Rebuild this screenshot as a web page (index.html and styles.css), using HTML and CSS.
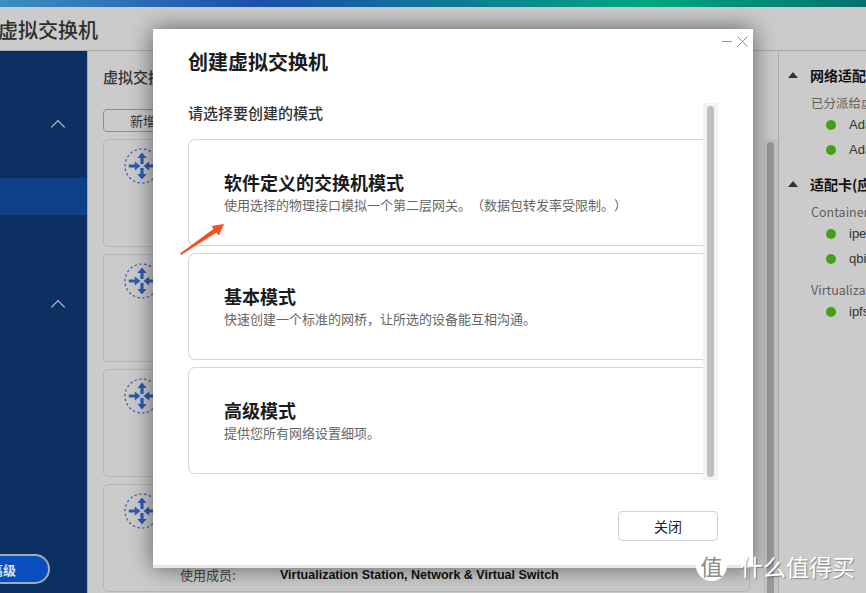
FILE: index.html
```html
<!DOCTYPE html>
<html lang="zh-CN">
  <head>
    <meta charset="UTF-8" />
    <meta name="viewport" content="width=device-width, initial-scale=1.0" />
    <title>虚拟交换机</title>
    <link rel="stylesheet" href="styles.css">
  </head>
  <body>
    <svg class="icon-defs" width="0" height="0">
      <symbol id="switch-icon" viewBox="0 0 36 36">
        <circle cx="18" cy="18" r="17" fill="none" stroke="#2f5bb5" stroke-width="1.2" stroke-dasharray="2.4 2.4" />
        <path d="M18 4.5l4.6 5.6h-3v6h-3.2v-6h-3zM18 31.5l-4.6-5.6h3v-6h3.2v6h3zM4.8 16.4h6v-3l5.6 4.6-5.6 4.6v-3h-6zM31.2 19.6h-6v3l-5.6-4.6 5.6-4.6v3h6z" fill="#2f5bb5" />
      </symbol>
    </svg>

    <div class="topbar"></div>
    <header class="app-header">虚拟交换机</header>

    <div class="app-body">
      <nav class="sidebar">
        <div class="nav-group nav-group-first"><span class="chevron"></span></div>
        <div class="nav-item-active"></div>
        <div class="nav-group nav-group-second"><span class="chevron"></span></div>
        <button class="advanced-btn" type="button">高级</button>
      </nav>

      <main class="main">
        <div class="main-content">
          <h2 class="main-title">虚拟交换机</h2>
          <button class="add-btn" type="button">新增</button>
          <div class="switch-card"><svg class="switch-icon"><use href="#switch-icon" /></svg></div>
          <div class="switch-card"><svg class="switch-icon"><use href="#switch-icon" /></svg></div>
          <div class="switch-card"><svg class="switch-icon"><use href="#switch-icon" /></svg></div>
          <div class="switch-card">
            <svg class="switch-icon"><use href="#switch-icon" /></svg>
            <div class="member-row">
              <span class="member-label">使用成员:</span>
              <span class="member-value">Virtualization Station, Network &amp; Virtual Switch</span>
            </div>
          </div>
        </div>
        <div class="main-scroll"><div class="main-thumb"></div></div>
      </main>

      <aside class="panel">
        <div class="panel-head panel-head-first"><span class="triangle"></span>网络适配器</div>
        <div class="panel-label">已分派给虚拟交换机</div>
        <div class="panel-row"><span class="dot"></span>Adapter 1</div>
        <div class="panel-row"><span class="dot"></span>Adapter 2</div>

        <div class="panel-head panel-head-second"><span class="triangle"></span>适配卡(应用程序)</div>
        <div class="panel-label">Container Station</div>
        <div class="panel-row"><span class="dot"></span>ipext</div>
        <div class="panel-row"><span class="dot"></span>qbittorrent</div>
        <div class="panel-label panel-label-gap">Virtualization Station</div>
        <div class="panel-row"><span class="dot"></span>ipfs</div>
      </aside>
    </div>

    <div class="dialog">
      <div class="dialog-controls">
        <span class="minimize"></span>
        <svg class="close-x" width="11" height="11" viewBox="0 0 11 11">
          <path d="M.5.5l10 10M10.5.5l-10 10" stroke="#8a8a8a" stroke-width="1" fill="none" />
        </svg>
      </div>
      <h1 class="dialog-title">创建虚拟交换机</h1>
      <div class="dialog-scroll">
        <div class="dialog-content">
          <p class="dialog-sub">请选择要创建的模式</p>
          <div class="mode-card">
            <div class="mode-title">软件定义的交换机模式</div>
            <div class="mode-desc">使用选择的物理接口模拟一个第二层网关。&#xFF08;数据包转发率受限制。&#xFF09;</div>
          </div>
          <div class="mode-card">
            <div class="mode-title">基本模式</div>
            <div class="mode-desc">快速创建一个标准的网桥&#xFF0C;让所选的设备能互相沟通。</div>
          </div>
          <div class="mode-card">
            <div class="mode-title">高级模式</div>
            <div class="mode-desc">提供您所有网络设置细项。</div>
          </div>
        </div>
        <div class="dialog-track"><div class="dialog-thumb"></div></div>
      </div>
      <div class="dialog-foot">
        <button class="close-btn" type="button">关闭</button>
      </div>
    </div>

    <svg class="annotation" width="50" height="36" viewBox="0 0 50 36">
      <path d="M1 32.5L34.5 8 32.5 5 45 3 40 14.5 37.5 11.5 2 34z" fill="#f4511e" />
    </svg>

    <div class="watermark">
      <span class="watermark-logo">值</span>
      <span class="watermark-text">什么值得买</span>
    </div>
  </body>
</html>
```

FILE: styles.css
```css
body {
  font-family: "Noto Sans CJK SC", "Liberation Sans", sans-serif;
  margin: 0;
  padding: 0;
  width: 866px;
  height: 593px;
  overflow: hidden;
  position: relative;
  background-color: #cbcbcb;
  color: #2b2b2b;
}

.icon-defs {
  position: absolute;
}

.topbar {
  height: 7px;
  background: linear-gradient(90deg, #3b8fc0 0%, #1c50ae 30%, #00a880 75%, #05706f 100%);
}

.app-header {
  height: 43px;
  line-height: 45px;
  margin-left: -2px;
  font-size: 20px;
  font-weight: 500;
  color: #2e2e2e;
  border-bottom: 1px solid #a9a9a9;
}

.app-body {
  display: flex;
  height: 542px;
}

/* left navigation */
.sidebar {
  width: 87px;
  flex-shrink: 0;
  background-color: #0a2f60;
  border-right: 1px solid #a9a9a9;
  display: flex;
  flex-direction: column;
  overflow: hidden;
}

.nav-group {
  display: flex;
  justify-content: flex-end;
  padding-right: 24px;
  box-sizing: border-box;
}

.nav-group-first {
  height: 127px;
  padding-top: 71px;
}

.nav-group-second {
  height: 128px;
  padding-top: 87px;
}

.nav-item-active {
  height: 37px;
  background-color: #0e4088;
}

.chevron {
  width: 9px;
  height: 9px;
  border-left: 1.5px solid #c6cfdc;
  border-top: 1.5px solid #c6cfdc;
  transform: rotate(45deg);
}

.advanced-btn {
  width: 80px;
  height: 30px;
  margin: 211px 0 0 -30px;
  padding: 0 0 0 18px;
  text-align: left;
  font-family: inherit;
  font-size: 13px;
  font-weight: 700;
  color: #dfe3ea;
  background-color: #0a4dbf;
  border: 2px solid #a4abb6;
  border-radius: 15px;
  flex-shrink: 0;
}

/* main list */
.main {
  width: 690px;
  flex-shrink: 0;
  display: flex;
}

.main-content {
  width: 647px;
  margin-right: 13px;
  padding-left: 15px;
  flex-shrink: 0;
}

.main-title {
  margin: 15px 0 0;
  font-size: 15px;
  line-height: 22px;
  font-weight: 500;
  color: #333;
}

.add-btn {
  display: block;
  width: 90px;
  height: 23px;
  margin-top: 21px;
  padding: 0 0 0 26px;
  text-align: left;
  font-family: inherit;
  font-size: 13px;
  color: #333;
  background: transparent;
  border: 1px solid #8f8f8f;
  border-radius: 4px;
}

.switch-card {
  height: 108px;
  margin-top: 7px;
  box-sizing: border-box;
  border: 1px solid #b5b5b5;
  border-radius: 5px;
  padding: 8px 0 0 20px;
}

.switch-icon {
  display: block;
  width: 36px;
  height: 36px;
}

.member-row {
  display: flex;
  margin: 37px 0 0 56px;
  font-size: 12.5px;
  line-height: 18px;
}

.member-label {
  width: 100px;
  color: #444;
  font-size: 13px;
}

.member-value {
  font-family: "Liberation Sans", sans-serif;
  font-weight: 700;
  color: #111;
}

.main-scroll {
  width: 15px;
  height: 454px;
  margin-top: 88px;
  background-color: #c3c3c3;
  padding: 3px 4px 0;
  box-sizing: border-box;
}

.main-thumb {
  height: 460px;
  background-color: #989898;
  border-radius: 4px;
}

/* right panel */
.panel {
  flex: 1;
  border-left: 1px solid #a9a9a9;
  white-space: nowrap;
  overflow: hidden;
  font-size: 13px;
}

.panel-head {
  display: flex;
  align-items: center;
  font-size: 14px;
  font-weight: 700;
  color: #111;
  line-height: 20px;
}

.panel-head-first {
  margin-top: 14px;
}

.panel-head-second {
  margin-top: 12px;
}

.triangle {
  width: 0;
  height: 0;
  margin: 0 12px 0 9px;
  border-left: 5px solid transparent;
  border-right: 5px solid transparent;
  border-bottom: 6px solid #333;
}

.panel-label {
  margin: 9px 0 0 32px;
  line-height: 18px;
  font-size: 12.5px;
  color: #5f5f5f;
}

.panel-label-gap {
  margin-top: 10px;
}

.panel-row {
  display: flex;
  align-items: center;
  height: 25px;
  padding-left: 47px;
  font-family: "Liberation Sans", sans-serif;
  color: #333;
}

.dot {
  width: 10px;
  height: 10px;
  flex-shrink: 0;
  margin-right: 13px;
  border-radius: 50%;
  background-color: #43a017;
}

/* dialog */
.dialog {
  position: absolute;
  left: 153px;
  top: 29px;
  width: 600px;
  height: 539px;
  box-sizing: border-box;
  display: flex;
  flex-direction: column;
  background-color: #ffffff;
  border-bottom: 3px solid #e8e8e8;
  box-shadow: 0 0 22px rgba(0, 0, 0, 0.55);
}

.dialog-controls {
  position: absolute;
  top: 7px;
  right: 5px;
  display: flex;
  align-items: center;
  gap: 5px;
}

.minimize {
  width: 10px;
  height: 1px;
  background-color: #9a9a9a;
}

.dialog-title {
  margin: 20px 0 0 35px;
  font-size: 20px;
  line-height: 26px;
  font-weight: 700;
  color: #1c1c1c;
}

.dialog-scroll {
  display: flex;
  height: 377px;
  margin: 28px 35px 0;
  flex-shrink: 0;
}

.dialog-content {
  flex: 1;
  overflow: hidden;
}

.dialog-sub {
  margin: 0 0 16px;
  height: 20px;
  font-size: 15px;
  line-height: 20px;
  font-weight: 500;
  color: #333;
}

.mode-card {
  height: 107px;
  margin-bottom: 7px;
  box-sizing: border-box;
  padding: 30px 0 0 35px;
  border: 1px solid #d6d6dc;
  border-right: none;
  border-radius: 7px 0 0 7px;
}

.mode-title {
  font-size: 18px;
  line-height: 24px;
  margin-bottom: 2px;
  font-weight: 700;
  color: #1a1a1a;
}

.mode-desc {
  font-size: 13px;
  line-height: 18px;
  color: #666;
  text-spacing-trim: space-all;
}

.dialog-track {
  width: 15px;
  flex-shrink: 0;
  box-sizing: border-box;
  padding: 3px 4px;
  background-color: #f3f3f3;
}

.dialog-thumb {
  height: 100%;
  background-color: #c0c0c0;
  border-radius: 4px;
}

.dialog-foot {
  display: flex;
  justify-content: flex-end;
  padding: 31px 35px 0;
}

.close-btn {
  width: 100px;
  height: 30px;
  font-family: inherit;
  font-size: 14px;
  color: #222;
  background-color: #fff;
  border: 1px solid #d0d0d8;
  border-radius: 4px;
}

/* pasted on top of the screenshot */
.annotation {
  position: absolute;
  left: 179px;
  top: 221px;
}

.watermark {
  position: absolute;
  left: 696px;
  top: 550px;
  display: flex;
  align-items: center;
  gap: 13px;
}

.watermark-logo {
  width: 31px;
  height: 31px;
  border-radius: 50%;
  background-color: #fff;
  color: #8c8c8c;
  font-size: 22px;
  line-height: 30px;
  text-align: center;
}

.watermark-text {
  font-size: 23px;
  line-height: 30px;
  color: #fff;
  text-shadow: 1px 1px 1px rgba(0, 0, 0, 0.35);
}
```
